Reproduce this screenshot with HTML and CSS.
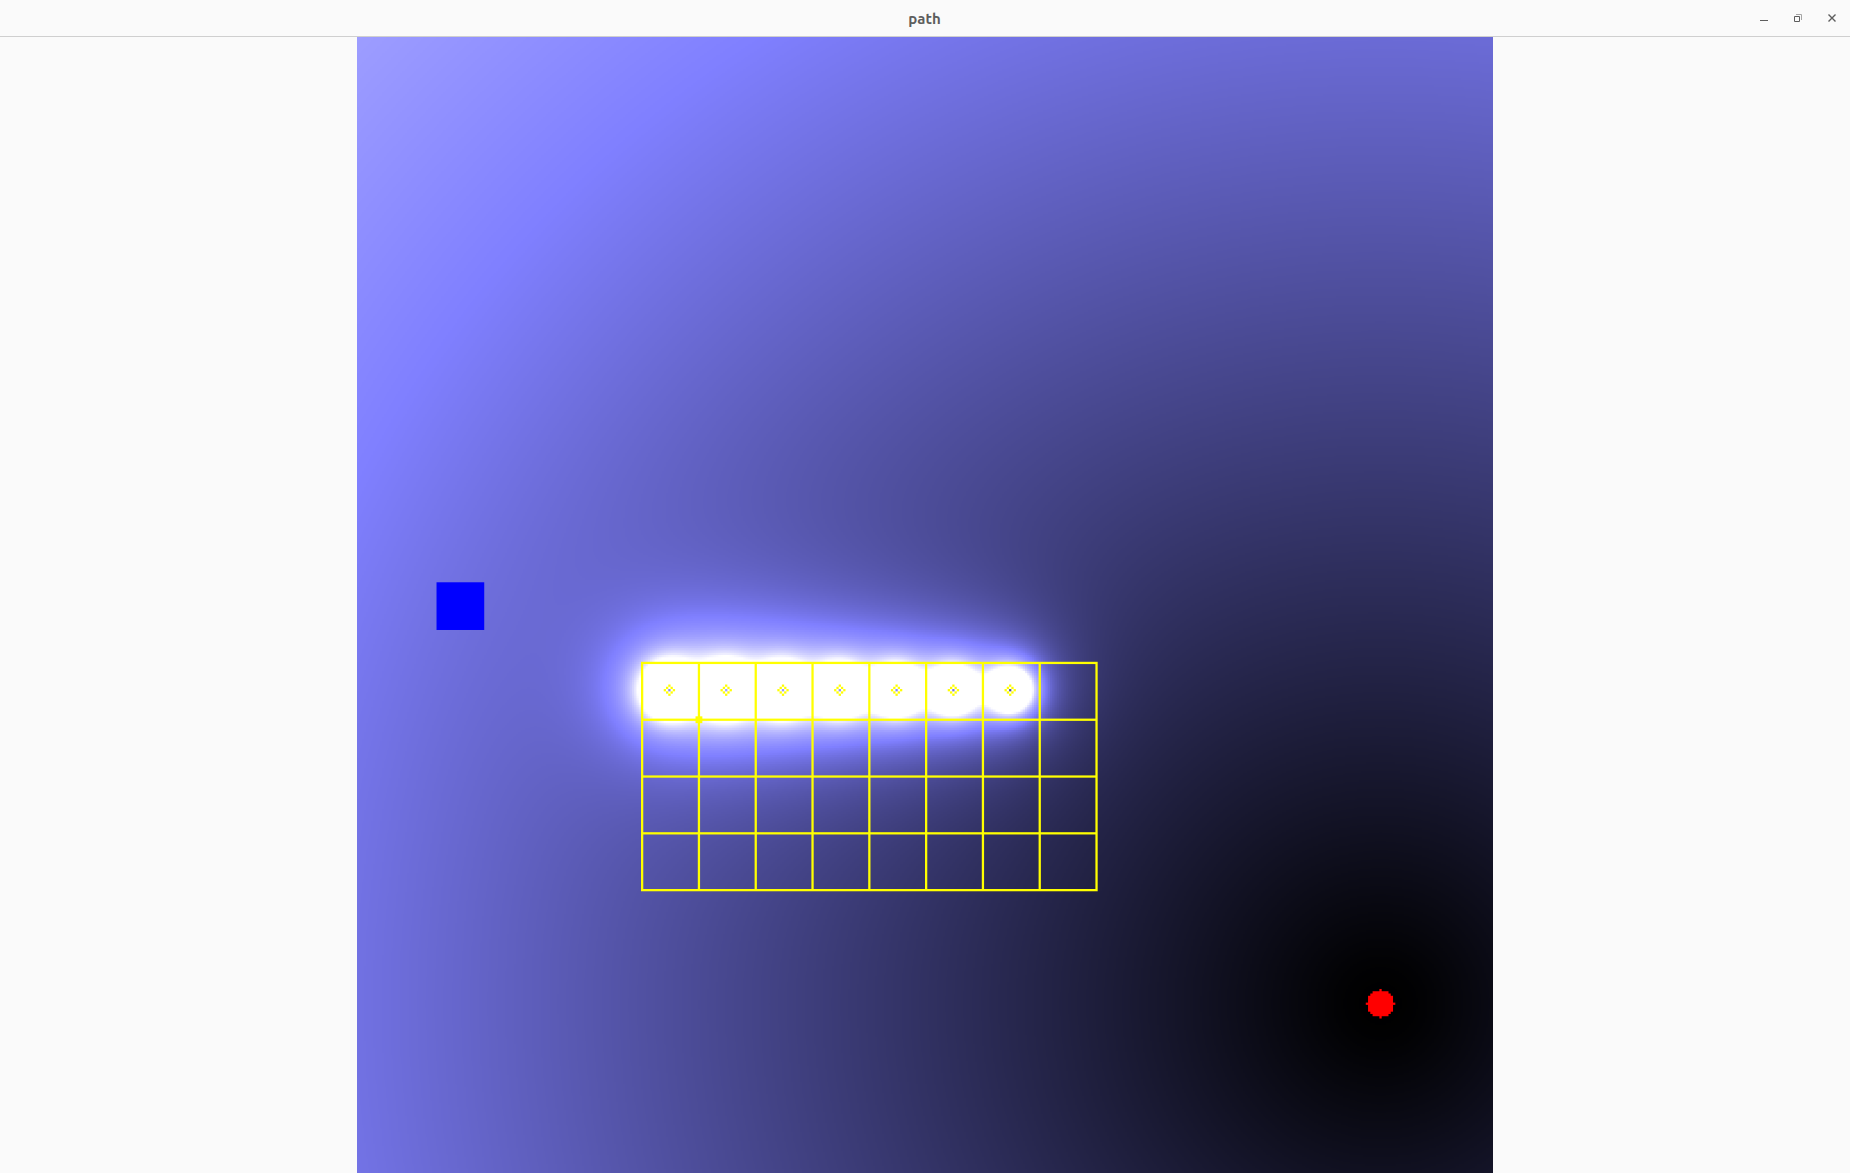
FILE: index.html
```html
<!DOCTYPE html>
<html lang="en">
<head>
<meta charset="utf-8">
<title>path</title>
<link rel="stylesheet" href="styles.css">
</head>
<body>
<header class="titlebar">
  <h1 class="title">path</h1>
  <div class="controls">
    <svg viewBox="0 0 10 10"><path d="M1 7.5H9" /></svg>
    <svg viewBox="0 0 10 10"><path class="back" d="M3 1.5H8.5V7"/><path d="M1.5 3.5H6.5V8.5H1.5Z"/></svg>
    <svg viewBox="0 0 10 10"><path class="cross" d="M1.5 1.5L8.5 8.5M8.5 1.5L1.5 8.5"/></svg>
  </div>
</header>
<main class="viewer"><canvas id="field" class="field" width="1136" height="1136"></canvas></main>
<script src="field.js"></script>
</body>
</html>
```

FILE: styles.css
```css
* { box-sizing: border-box; }
body {
  margin: 0;
  height: 100vh;
  overflow: hidden;
  display: flex;
  flex-direction: column;
  background: #fafafa;
  font-family: "Noto Sans", sans-serif;
}
.titlebar {
  flex: none;
  height: 37px;
  display: grid;
  grid-template-columns: 1fr auto 1fr;
  align-items: center;
  border-bottom: 1px solid #cfcfcf;
  padding: 0 13px;
}
.title {
  grid-column: 2;
  margin: 0;
  padding: 2px 1px 0 0;
  font-family: Ubuntu, "Noto Sans", sans-serif;
  font-size: 15px;
  line-height: 20px;
  font-weight: 700;
  color: #5d5d5d;
}
.controls {
  display: flex;
  justify-content: flex-end;
  gap: 24px;
}
.controls svg {
  width: 10px;
  height: 10px;
  fill: none;
  stroke: #5d5d5d;
  stroke-width: 1;
}
.controls .back { stroke: #a5a5a5; }
.controls .cross { stroke-width: 1.4; }
.viewer { flex: 1; display: flex; justify-content: center; }
.field { display: block; width: 1136px; height: 1136px; }
```

FILE: field.js
```js
// Potential field on a 20 m x 20 m map, 25 pixels per metre.
const N = 500, CELL = 25, OUT = 1136;
const goal = [450, 425];
const obstacles = [137, 162, 187, 212, 237, 262, 287].map(x => [x, 287]);
const GAIN = 12.9, BEND = 0.9, REP = 8.2, REACH = 5.6;
const buf = new Float32Array(N * N * 3);

function put(x, y, c) {
  if (x < 0 || y < 0 || x >= N || y >= N) return;
  buf.set(c, (y * N + x) * 3);
}
for (let y = 0; y < N; y++) for (let x = 0; x < N; x++) {
  const d = Math.hypot(x - goal[0], y - goal[1]) / CELL;
  let v = d < BEND ? GAIN * d * d / (2 * BEND) : GAIN * (d - BEND / 2);
  for (const [ox, oy] of obstacles) {
    const r = Math.hypot(x - ox, y - oy) / CELL;
    if (r > 0 && r < REACH) v += REP * d * (1 / r - 1 / REACH) ** 2;
  }
  put(x, y, [Math.min(255, v / 2), Math.min(255, v / 2), Math.min(255, v)]);
}

const YELLOW = [255, 255, 0], RED = [255, 0, 0], BLUE = [0, 0, 255];
for (let y = 275; y <= 375; y += CELL) for (let x = 125; x <= 325; x++) put(x, y, YELLOW);
for (let x = 125; x <= 325; x += CELL) for (let y = 275; y <= 375; y++) put(x, y, YELLOW);
const ring = [[0, -2], [-1, -1], [1, -1], [-2, 0], [2, 0], [-1, 1], [1, 1], [0, 2]];
for (const [ox, oy] of obstacles) for (const [dx, dy] of ring) put(ox + dx, oy + dy, YELLOW);
for (let y = -1; y <= 1; y++) for (let x = -1; x <= 1; x++) put(150 + x, 300 + y, YELLOW);
for (let y = 240; y <= 260; y++) for (let x = 35; x <= 55; x++) put(x, y, BLUE);
for (let y = -6; y <= 6; y++) for (let x = -6; x <= 6; x++)
  if (x * x + y * y <= 36) put(goal[0] + x, goal[1] + y, RED);

// Area-weighted resample to the display size.
function spans(i) {
  const a = i * N / OUT, b = (i + 1) * N / OUT, f = Math.floor(a);
  return b > f + 1 && f + 1 < N ? [[f, (f + 1 - a) / (b - a)], [f + 1, (b - f - 1) / (b - a)]] : [[f, 1]];
}
const table = Array.from({ length: OUT }, (_, i) => spans(i));
const ctx = document.getElementById("field").getContext("2d");
const image = ctx.createImageData(OUT, OUT);
for (let y = 0; y < OUT; y++) for (let x = 0; x < OUT; x++) {
  const o = (y * OUT + x) * 4;
  let r = 0, g = 0, b = 0;
  for (const [sy, wy] of table[y]) for (const [sx, wx] of table[x]) {
    const p = (sy * N + sx) * 3, w = wx * wy;
    r += buf[p] * w; g += buf[p + 1] * w; b += buf[p + 2] * w;
  }
  image.data[o] = r; image.data[o + 1] = g; image.data[o + 2] = b; image.data[o + 3] = 255;
}
ctx.putImageData(image, 0, 0);
```
